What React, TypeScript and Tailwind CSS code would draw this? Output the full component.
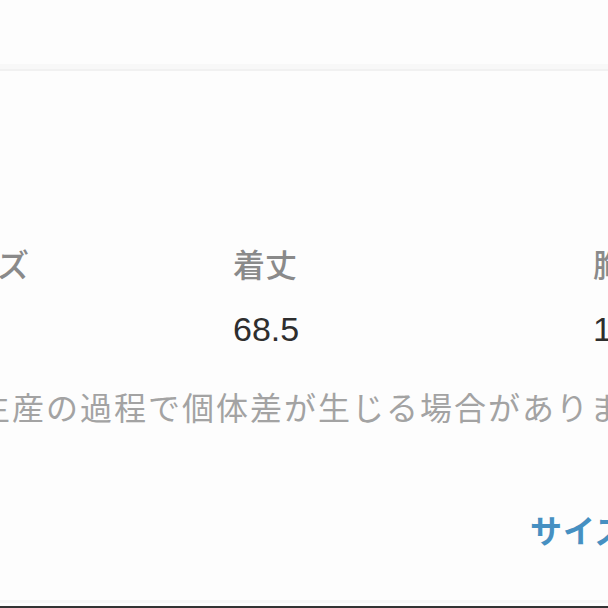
import React from "react";

const jp = "font-['Noto_Sans_CJK_JP','Noto_Sans',sans-serif]";

const columns = [
  { label: "サイズ", value: "", width: "w-[299px]" },
  { label: "着丈", value: "68.5", width: "w-[360px]" },
  { label: "胸囲", value: "108", width: "w-[120px]" },
];

export default function App() {
  return (
    <div className="w-[608px] h-[608px] bg-[#fdfdfd] overflow-hidden flex flex-col">
      <div className="h-16 shrink-0" />
      {/* divider under header area */}
      <div className="h-[7px] shrink-0 bg-[#f8f8f8] border-b-2 border-[#f1f1f1]" />

      {/* size table */}
      <div className="mt-[176px] flex ml-[-66px] whitespace-nowrap">
        {columns.map((c) => (
          <div key={c.label} className={`${c.width} shrink-0 flex flex-col`}>
            <span className={`${jp} text-[32px] leading-none font-medium text-[#8a8a8a]`}>{c.label}</span>
            <span className="mt-[33px] h-[34px] font-['Liberation_Sans',Arial,sans-serif] text-[34px] leading-none text-[#2e2e2e]">
              {c.value}
            </span>
          </div>
        ))}
      </div>

      {/* note */}
      <p className={`${jp} mt-[44px] ml-[-22px] text-[32px] tracking-[2px] leading-none text-[#a3a3a3] whitespace-nowrap`}>
        生産の過程で個体差が生じる場合があります。
      </p>

      <div className="mt-[91px] flex whitespace-nowrap">
        <a className={`${jp} ml-[530px] text-[32px] tracking-[1px] leading-none font-semibold text-[#4690c2]`}>
          サイズガイド
        </a>
      </div>

      <div className="mt-auto h-[3px] bg-[#f6f6f6]" />
      <div className="h-[3px] bg-[#fdfdfd]" />
      <div className="h-[2px] bg-[#333333]" />
    </div>
  );
}
